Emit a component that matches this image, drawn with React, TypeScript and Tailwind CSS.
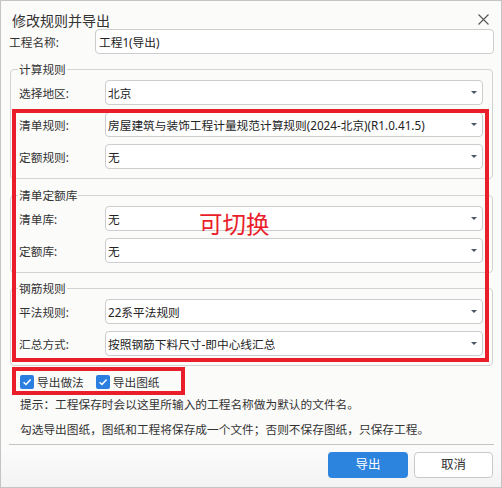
import React from "react";

const FONT = '"Noto Sans", "Noto Sans CJK SC", sans-serif';

function Caret() {
  return (
    <span className="block h-0 w-0 border-l-[3px] border-r-[3px] border-t-[3px] border-l-transparent border-r-transparent border-t-[#4d5566]" />
  );
}

function SelectBox({ value }: { value: string }) {
  return (
    <div className="flex h-[25px] flex-1 items-center justify-between rounded-[4px] border border-[#cdcdcd] bg-white pl-[2px] pr-[5px]">
      <span className="truncate text-[11.7px] leading-[16px] text-[#222]">{value}</span>
      <Caret />
    </div>
  );
}

function Row({ label, value }: { label: string; value: string }) {
  return (
    <div className="flex h-[25px] items-center">
      <span className="w-[86px] shrink-0 text-[11.7px] leading-[16px] text-[#333]">{label}</span>
      <SelectBox value={value} />
    </div>
  );
}

function Group({
  title,
  className,
  children,
}: {
  title: string;
  className?: string;
  children: React.ReactNode;
}) {
  return (
    <fieldset
      className={
        "ml-[9px] mr-[8px] rounded-[4px] border border-[#d3d3d3] pb-[9px] pl-[8px] pr-[9px] pt-[3px] " +
        (className ?? "")
      }
    >
      <legend className="ml-[-1px] px-[1px] text-[11.7px] leading-[16px] text-[#333]">{title}</legend>
      <div className="flex flex-col gap-[7px]">{children}</div>
    </fieldset>
  );
}

function Check({ label }: { label: string }) {
  return (
    <label className="flex items-center gap-[3px]">
      <span className="flex h-[14px] w-[14px] items-center justify-center rounded-[2px] bg-[#2b7fe0]">
        <svg width="10" height="10" viewBox="0 0 10 10">
          <path d="M1.6 5.2 L4 7.5 L8.6 2.4" fill="none" stroke="#fff" strokeWidth="1.5" />
        </svg>
      </span>
      <span className="text-[11.7px] leading-[16px] text-[#333]">{label}</span>
    </label>
  );
}

export default function App() {
  return (
    <div
      className="relative flex h-[488px] w-[502px] flex-col border border-[#c4c4c4] bg-[#fbfbfa]"
      style={{ fontFamily: FONT }}
    >
      {/* title bar */}
      <div className="flex h-[28px] shrink-0 items-start justify-between pl-[11px] pr-[12px] pt-[10px]">
        <span className="text-[14px] leading-[20px] text-[#333]">修改规则并导出</span>
        <svg className="mt-[3px]" width="11" height="11" viewBox="0 0 11 11">
          <path d="M0.5 0.5 L10.5 10.5 M10.5 0.5 L0.5 10.5" stroke="#555" strokeWidth="1.1" />
        </svg>
      </div>

      {/* project name */}
      <div className="flex h-[25px] shrink-0 items-center pl-[8px] pr-[7px]">
        <span className="w-[86px] shrink-0 text-[11.7px] leading-[16px] text-[#333]">工程名称:</span>
        <div className="flex h-[25px] flex-1 items-center rounded-[4px] border border-[#cdcdcd] bg-white pl-[3px]">
          <span className="text-[11.7px] leading-[16px] text-[#222]">工程1(导出)</span>
        </div>
      </div>

      <Group title="计算规则" className="mt-[7px]">
        <Row label="选择地区:" value="北京" />
        <Row label="清单规则:" value="房屋建筑与装饰工程计量规范计算规则(2024-北京)(R1.0.41.5)" />
        <Row label="定额规则:" value="无" />
      </Group>

      <Group title="清单定额库" className="mt-[8px]">
        <Row label="清单库:" value="无" />
        <Row label="定额库:" value="无" />
      </Group>

      <Group title="钢筋规则" className="mt-[7px]">
        <Row label="平法规则:" value="22系平法规则" />
        <Row label="汇总方式:" value="按照钢筋下料尺寸-即中心线汇总" />
      </Group>

      {/* export options */}
      <div className="mt-[6px] flex h-[20px] shrink-0 items-center gap-[12px] pl-[19px]">
        <Check label="导出做法" />
        <Check label="导出图纸" />
      </div>

      <p className="mt-[2px] pl-[19px] text-[11.7px] leading-[20px] text-[#333]">
        提示：工程保存时会以这里所输入的工程名称做为默认的文件名。
      </p>
      <p className="mt-[5px] pl-[19px] text-[11.7px] leading-[20px] text-[#333]">
        勾选导出图纸，图纸和工程将保存成一个文件；否则不保存图纸，只保存工程。
      </p>

      {/* footer */}
      <div className="mt-[5px] flex flex-1 flex-col bg-gradient-to-b from-[#fcfcfc] to-[#f3f3f3]">
        <div className="ml-[8px] mr-[7px] h-px bg-[#c2c2c2]" />
        <div className="mt-[7px] flex justify-end gap-[6px] pr-[8px]">
          <button className="flex h-[26px] w-[80px] items-center justify-center rounded-[4px] bg-[#2d84df] text-[12.5px] text-white">
            导出
          </button>
          <button className="flex h-[26px] w-[79px] items-center justify-center rounded-[4px] border border-[#c9c9c9] bg-white text-[12.5px] text-[#333]">
            取消
          </button>
        </div>
      </div>

      {/* annotation marks drawn over the form */}
      <div className="pointer-events-none absolute left-[11px] top-[108px] h-[253px] w-[477px] border-[4px] border-[#ea1d2a]" />
      <div className="pointer-events-none absolute left-[11px] top-[366px] h-[28px] w-[173px] border-[4px] border-[#ea1d2a]" />
      <span className="pointer-events-none absolute left-[198px] top-[209px] text-[23.5px] leading-[28px] text-[#ea1d2a]">
        可切换
      </span>
    </div>
  );
}
